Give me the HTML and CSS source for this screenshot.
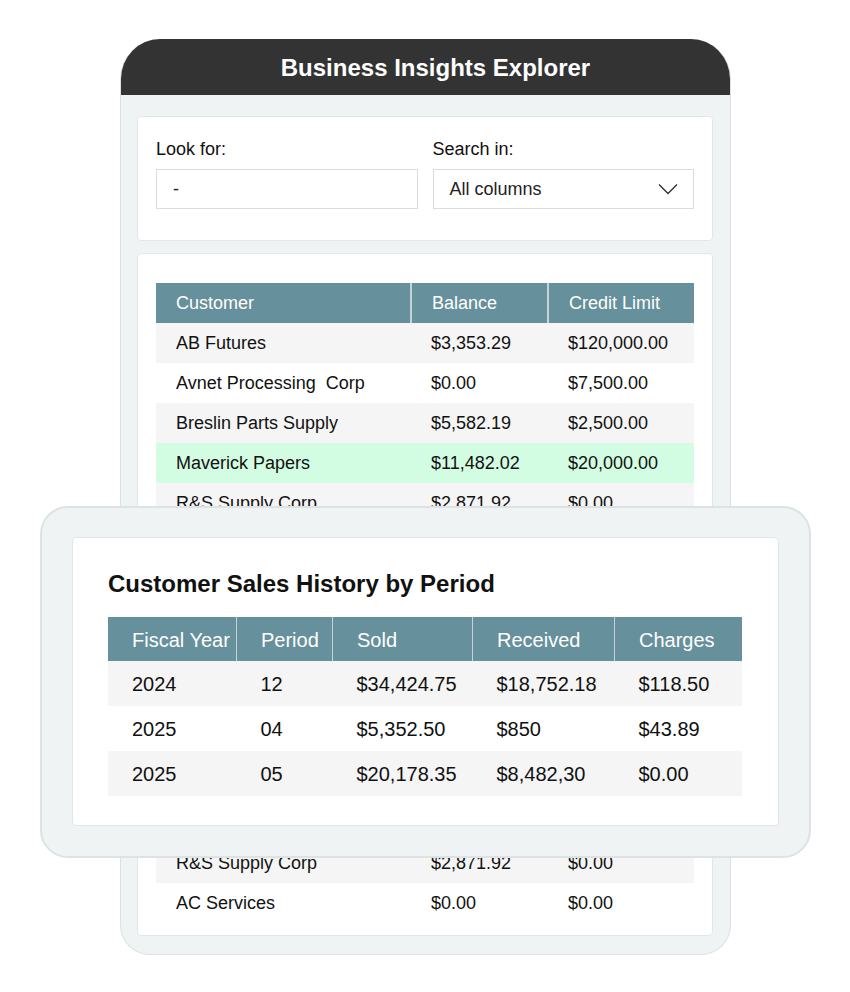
FILE: index.html
```html
<!DOCTYPE html>
<html lang="en">
<head>
  <meta charset="UTF-8" />
  <title>Business Insights Explorer</title>
  <link rel="stylesheet" href="styles.css">
</head>
<body>
  <div class="stage">
    <div class="window">
      <div class="window-title">Business Insights Explorer</div>
      <div class="window-body">
        <div class="card search-card">
          <div class="field">
            <label for="lookFor">Look for:</label>
            <input id="lookFor" class="text-input" type="text" value="-" />
          </div>
          <div class="field">
            <label>Search in:</label>
            <div class="select-box">
              <span>All columns</span>
              <svg width="20" height="12" viewBox="0 0 20 12"><path d="M1 1.5 L10 10.5 L19 1.5" fill="none" stroke="#333" stroke-width="1.4"/></svg>
            </div>
          </div>
        </div>
        <div class="card table-card">
          <table class="grid customers">
            <thead>
              <tr><th class="c-name">Customer</th><th class="c-bal">Balance</th><th>Credit Limit</th></tr>
            </thead>
            <tbody>
              <tr class="alt"><td>AB Futures</td><td>$3,353.29</td><td>$120,000.00</td></tr>
              <tr><td>Avnet Processing&nbsp; Corp</td><td>$0.00</td><td>$7,500.00</td></tr>
              <tr class="alt"><td>Breslin Parts Supply</td><td>$5,582.19</td><td>$2,500.00</td></tr>
              <tr class="picked"><td>Maverick Papers</td><td>$11,482.02</td><td>$20,000.00</td></tr>
              <tr class="alt"><td>R&amp;S Supply Corp</td><td>$2,871.92</td><td>$0.00</td></tr>
              <tr><td>Carver Tool Works</td><td>$1,204.50</td><td>$5,000.00</td></tr>
              <tr class="alt"><td>Delmar Logistics</td><td>$0.00</td><td>$10,000.00</td></tr>
              <tr><td>Eastfield Metals</td><td>$742.10</td><td>$3,000.00</td></tr>
              <tr class="alt"><td>Franklin Office Goods</td><td>$2,310.00</td><td>$8,000.00</td></tr>
              <tr><td>Granite Packaging</td><td>$0.00</td><td>$4,500.00</td></tr>
              <tr class="alt"><td>Harbor Freight Lines</td><td>$6,118.44</td><td>$15,000.00</td></tr>
              <tr><td>Iron Ridge Supply</td><td>$90.25</td><td>$2,000.00</td></tr>
              <tr class="alt"><td>Jensen Fabrication</td><td>$0.00</td><td>$6,000.00</td></tr>
              <tr class="alt"><td>R&amp;S Supply Corp</td><td>$2,871.92</td><td>$0.00</td></tr>
              <tr><td>AC Services</td><td>$0.00</td><td>$0.00</td></tr>
            </tbody>
          </table>
        </div>
      </div>
    </div>

    <div class="popup">
      <div class="popup-card">
        <h2 class="popup-title">Customer Sales History by Period</h2>
        <table class="grid history">
          <thead>
            <tr><th class="h-year">Fiscal Year</th><th class="h-period">Period</th><th class="h-sold">Sold</th><th class="h-recv">Received</th><th>Charges</th></tr>
          </thead>
          <tbody>
            <tr class="alt"><td>2024</td><td>12</td><td>$34,424.75</td><td>$18,752.18</td><td>$118.50</td></tr>
            <tr><td>2025</td><td>04</td><td>$5,352.50</td><td>$850</td><td>$43.89</td></tr>
            <tr class="alt"><td>2025</td><td>05</td><td>$20,178.35</td><td>$8,482,30</td><td>$0.00</td></tr>
          </tbody>
        </table>
      </div>
    </div>
  </div>
</body>
</html>
```

FILE: styles.css
```css
body {
  margin: 0;
  background-color: #fff;
  font-family: "Liberation Sans", Arial, sans-serif;
  color: #111;
}
.stage {
  position: relative;
  width: 850px;
  height: 992px;
  padding-top: 39px;
  box-sizing: border-box;
}
.window {
  margin-left: 120px;
  width: 611px;
  background-color: #f0f3f4;
  border: 1px solid #dce1e3;
  border-top: none;
  border-radius: 40px 40px 30px 30px;
  overflow: hidden;
  box-sizing: border-box;
}
.window-title {
  height: 56px;
  background-color: #333;
  color: #fff;
  font-size: 24px;
  font-weight: bold;
  display: flex;
  align-items: center;
  justify-content: center;
  padding: 2px 0 0 20px;
  box-sizing: border-box;
}
.window-body {
  padding: 21px 17px 18px 16px;
  display: flex;
  flex-direction: column;
  gap: 12px;
}
.card {
  background-color: #fff;
  border: 1px solid #e2e6e8;
  border-radius: 4px;
}
.search-card {
  display: grid;
  grid-template-columns: 1fr 1fr;
  gap: 15px;
  padding: 21px 18px 31px 18px;
}
.field label {
  display: block;
  font-size: 18px;
  line-height: 22px;
  margin-bottom: 9px;
}
.text-input, .select-box {
  width: 100%;
  height: 40px;
  box-sizing: border-box;
  border: 1px solid #d8dde0;
  background-color: #fff;
  font-family: "Liberation Sans", Arial, sans-serif;
  font-size: 18px;
  color: #222;
  padding: 0 16px;
  margin: 0;
  outline: none;
}
.select-box {
  display: flex;
  align-items: center;
  justify-content: space-between;
}
.select-box svg {
  margin-right: -1px;
}
.table-card {
  padding: 29px 18px 12px 18px;
}
.grid {
  width: 100%;
  border-collapse: collapse;
  table-layout: fixed;
}
.grid th {
  background-color: #66909b;
  color: #fff;
  font-weight: normal;
  text-align: left;
  border-left: 2px solid #c3d3d8;
}
.grid th:first-child {
  border-left: none;
}
.grid tr.alt td {
  background-color: #f5f5f5;
}
.grid tr.picked td {
  background-color: #d3fde3;
}
.customers th, .customers td {
  height: 40px;
  padding: 0 0 0 20px;
  font-size: 18px;
  white-space: nowrap;
}
.customers td {
  height: 39px;
  padding-top: 1px;
}
.customers .c-name {
  width: 234px;
}
.customers .c-bal {
  width: 115px;
}
.popup {
  position: absolute;
  left: 40px;
  top: 506px;
  width: 771px;
  height: 352px;
  box-sizing: border-box;
  background-color: #f0f3f4;
  border: 2px solid #dde2e4;
  border-radius: 28px;
  padding: 29px 30px 30px;
}
.popup-card {
  background-color: #fff;
  border: 1px solid #e1e5e7;
  border-radius: 4px;
  height: 100%;
  box-sizing: border-box;
  padding: 31px 36px 0 35px;
}
.popup-title {
  margin: 0 0 18px;
  font-size: 24px;
  line-height: 30px;
  font-weight: bold;
  color: #111;
}
.history th {
  height: 42px;
  padding: 2px 0 0 24px;
  font-size: 20px;
  border-left-width: 1px;
}
.history td {
  height: 43px;
  padding: 2px 0 0 24px;
  font-size: 20px;
}
.history .h-year {
  width: 104px;
}
.history .h-period {
  width: 71px;
}
.history .h-sold {
  width: 115px;
}
.history .h-recv {
  width: 117px;
}
```
